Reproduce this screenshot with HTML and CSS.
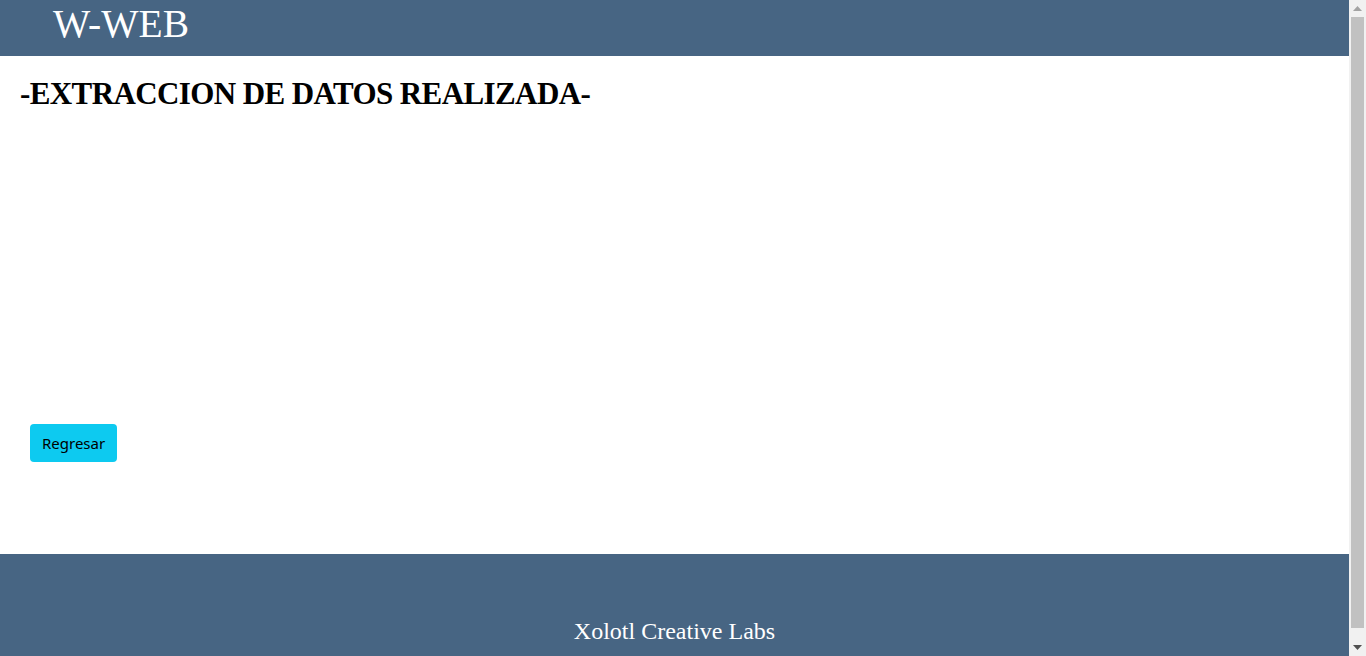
FILE: index.html
```html
<!DOCTYPE html>
<html lang="es">
<head>
<meta charset="utf-8">
<title>W-WEB</title>
<link rel="stylesheet" href="styles.css">
</head>
<body>
<header class="site-header">
  <div class="brand">W-WEB</div>
</header>
<main class="content">
  <h1 class="title">-EXTRACCION DE DATOS REALIZADA-</h1>
  <div class="actions">
    <button class="btn-info" type="button">Regresar</button>
  </div>
</main>
<footer class="site-footer">
  <p class="footer-text">Xolotl Creative Labs</p>
</footer>
<div class="scrollbar" aria-hidden="true">
  <div class="scroll-arrow">
    <svg width="9" height="5" viewBox="0 0 9 5"><path d="M0 5 L4.5 0 L9 5 Z" fill="#a3a3a3"/></svg>
  </div>
  <div class="scroll-track"><div class="scroll-thumb"></div></div>
  <div class="scroll-arrow">
    <svg width="9" height="5" viewBox="0 0 9 5"><path d="M0 0 L4.5 5 L9 0 Z" fill="#505050"/></svg>
  </div>
</div>
</body>
</html>
```

FILE: styles.css
```css
html, body {
  margin: 0;
  padding: 0;
}
body {
  font-family: "Liberation Serif", "Times New Roman", serif;
  background: #ffffff;
  color: #000;
  padding-right: 17px;
}
.site-header {
  height: 56px;
  background: #476583;
  padding-left: 53px;
  box-sizing: border-box;
}
.brand {
  color: #ffffff;
  font-size: 39.5px;
  line-height: 40px;
  padding-top: 4px;
}
.content {
  height: 498px;
  box-sizing: border-box;
  padding: 0 20px;
  display: flex;
  flex-direction: column;
}
.title {
  margin: 19px 0 0 0;
  font-size: 31px;
  font-weight: bold;
  line-height: 37px;
  letter-spacing: -0.6px;
}
.actions {
  margin-top: 312px;
  padding-left: 10px;
}
.btn-info {
  font-family: "Noto Sans", "Open Sans", sans-serif;
  font-size: 15px;
  line-height: 22px;
  padding: 8px 12px;
  background: #0dcaf0;
  color: #000;
  border: 0;
  border-radius: 4px;
  cursor: pointer;
}
.site-footer {
  height: 114px;
  background: #476583;
  box-sizing: border-box;
  padding-top: 63px;
  text-align: center;
}
.footer-text {
  margin: 0;
  color: #ffffff;
  font-size: 24px;
  line-height: 28px;
}
.scrollbar {
  position: fixed;
  top: 0;
  right: 0;
  width: 17px;
  height: 100vh;
  background: #f1f1f1;
  display: flex;
  flex-direction: column;
}
.scroll-arrow {
  height: 17px;
  flex: 0 0 17px;
  display: flex;
  align-items: center;
  justify-content: center;
}
.scroll-track {
  flex: 1;
  padding: 0 2px;
}
.scroll-thumb {
  height: 611px;
  background: #c1c1c1;
}
```
